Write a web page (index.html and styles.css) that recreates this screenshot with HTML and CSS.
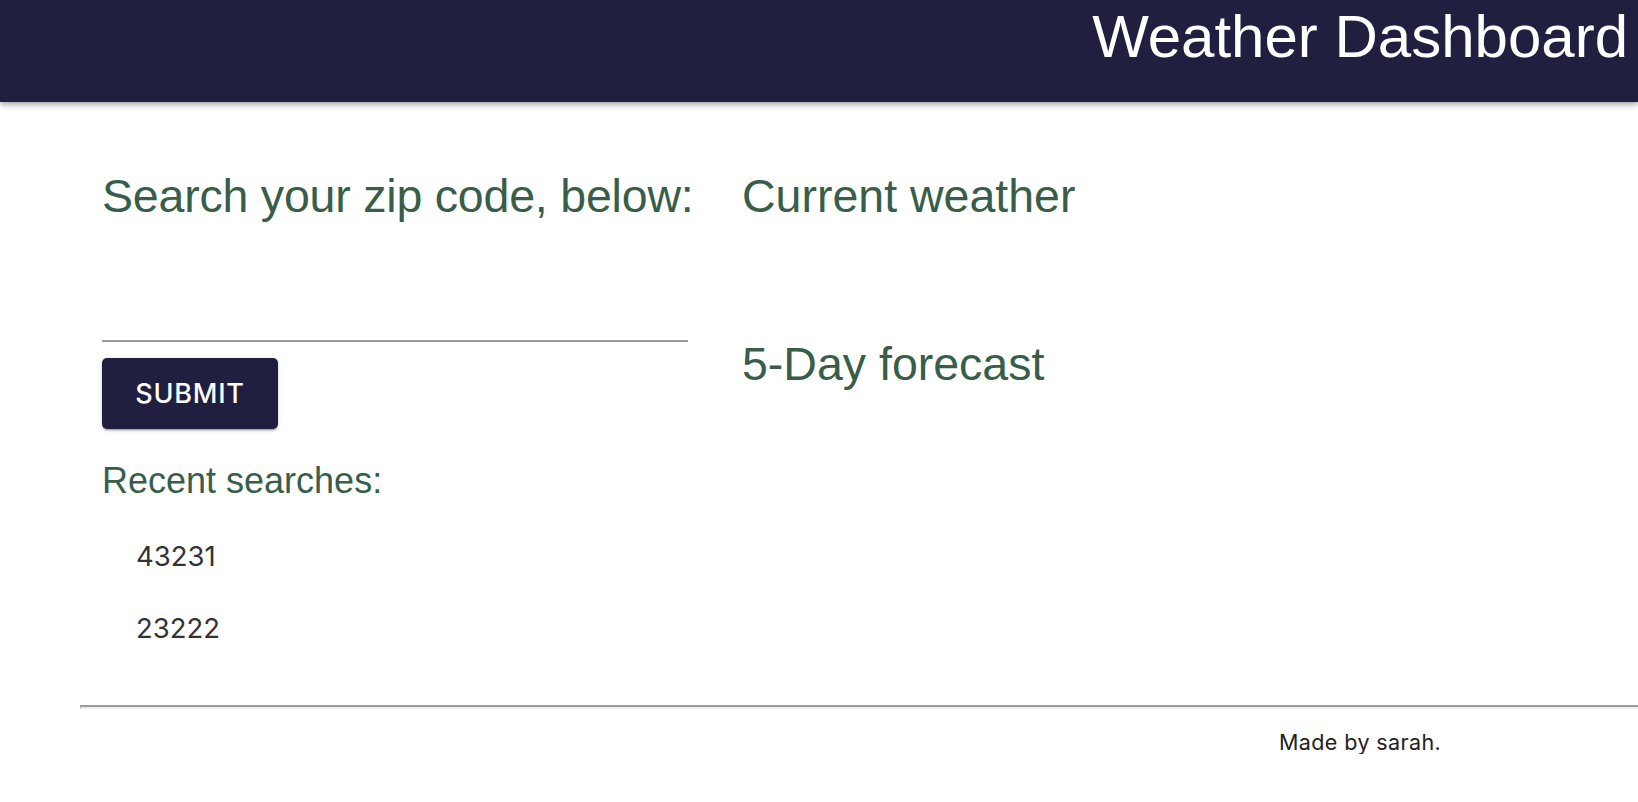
FILE: index.html
```html
<!DOCTYPE html>
<html lang="en">
<head>
<meta charset="utf-8">
<title>Weather Dashboard</title>
<link rel="stylesheet" href="styles.css">
</head>
<body>
<header class="appbar">
  <h1 class="title">Weather Dashboard</h1>
</header>
<main class="content">
  <section class="search">
    <h2 class="heading heading-search">Search your zip code, below:</h2>
    <div class="field"><input class="zip-input" type="text" aria-label="Zip code"></div>
    <button class="submit" type="button">Submit</button>
    <h3 class="recent-title">Recent searches:</h3>
    <ul class="recent-list">
      <li class="recent-item">43231</li>
      <li class="recent-item">23222</li>
    </ul>
  </section>
  <section class="weather">
    <h2 class="heading">Current weather</h2>
    <h2 class="heading forecast">5-Day forecast</h2>
  </section>
</main>
<footer class="footer">
  <hr class="rule">
  <p class="credit">Made by sarah.</p>
</footer>
</body>
</html>
```
FILE: styles.css
```css
* { box-sizing: border-box; }

html, body {
  margin: 0;
  padding: 0;
  background: #ffffff;
}

body {
  font-family: "Liberation Sans", Arial, sans-serif;
  overflow: hidden;
}

.appbar {
  height: 102px;
  background: #201f3f;
  padding: 1px 10px 0 0;
  box-shadow: 0 2px 4px -1px rgba(0,0,0,0.2), 0 4px 5px 0 rgba(0,0,0,0.14), 0 1px 10px 0 rgba(0,0,0,0.12);
  position: relative;
  z-index: 1;
}

.title {
  margin: 0;
  text-align: right;
  color: #ffffff;
  font-weight: 400;
  font-size: 60px;
  line-height: 72px;
  letter-spacing: 0;
}

.content {
  display: grid;
  grid-template-columns: 586px 1fr;
  column-gap: 54px;
  padding: 66px 0 0 102px;
}

.heading {
  margin: 0;
  font-size: 46.5px;
  line-height: 56px;
  font-weight: 400;
  color: #385e4a;
  white-space: nowrap;
}

.heading-search {
  letter-spacing: -0.2px;
}

.forecast {
  margin-top: 112px;
}

.field {
  margin-top: 76px;
}

.zip-input {
  display: block;
  width: 100%;
  height: 42px;
  border: 0;
  border-bottom: 2px solid #9a9a9a;
  background: transparent;
  outline: none;
  font-family: "Inter", sans-serif;
  font-size: 24px;
  padding: 0;
}

.submit {
  display: block;
  margin-top: 16px;
  height: 71px;
  width: 176px;
  padding: 0;
  border: 0;
  border-radius: 5px;
  background: #201f3f;
  color: #ffffff;
  font-family: "Inter", sans-serif;
  font-weight: 500;
  font-size: 27px;
  letter-spacing: 0.8px;
  text-transform: uppercase;
  box-shadow: 0 3px 1px -2px rgba(0,0,0,0.2), 0 2px 2px 0 rgba(0,0,0,0.14), 0 1px 5px 0 rgba(0,0,0,0.12);
}

.recent-title {
  margin: 30px 0 0;
  font-size: 36px;
  line-height: 44px;
  font-weight: 400;
  color: #385e4a;
}

.recent-list {
  list-style: none;
  margin: 17px 0 0;
  padding: 0 0 0 34px;
}

.recent-item {
  font-family: "Inter", sans-serif;
  font-size: 27.5px;
  line-height: 72px;
  color: #333333;
}

.footer {
  padding: 41px 0 0 80px;
}

.rule {
  margin: 0;
  height: 0;
  border: 0;
  border-top: 2px solid #999999;
  border-bottom: 2px solid #eeeeee;
  border-left: 1px solid #999999;
}

.credit {
  margin: 21px 0 0 1199px;
  font-family: "Inter", sans-serif;
  font-size: 21.5px;
  line-height: 24px;
  letter-spacing: 0.4px;
  color: #222222;
}
```
